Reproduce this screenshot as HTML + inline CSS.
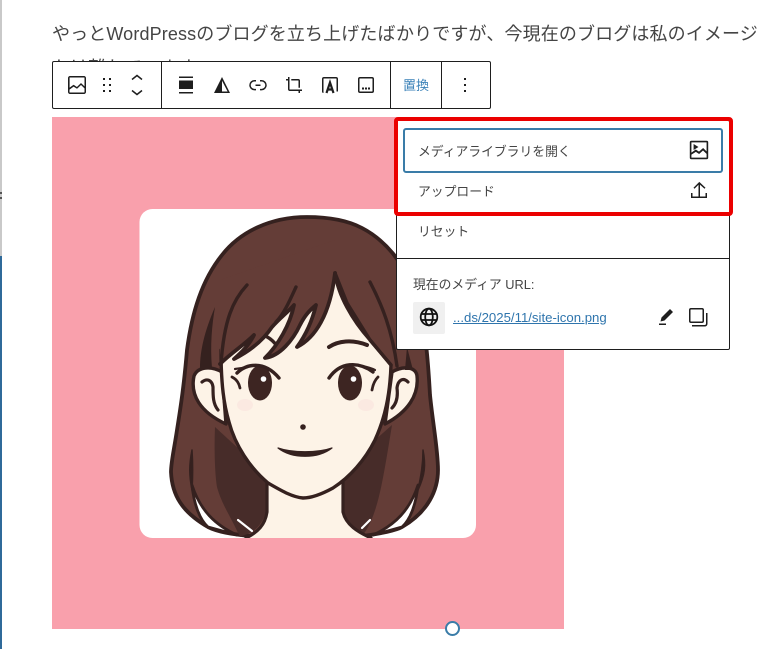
<!DOCTYPE html>
<html lang="ja">
<head>
<meta charset="utf-8">
<title>Image block</title>
<style>
html,body{margin:0;padding:0;background:#fff;}
body{width:759px;height:649px;position:relative;overflow:hidden;font-family:"Liberation Sans","Noto Sans CJK JP",sans-serif;color:#333;}
.abs{position:absolute;}
.line{left:52px;white-space:nowrap;font-size:18px;line-height:26px;color:#444;letter-spacing:.13px;}
.ic{position:absolute;width:24px;height:24px;fill:#1e1e1e;}
.t{position:absolute;white-space:nowrap;font-size:12.8px;line-height:18px;color:#444;}
</style>
</head>
<body>
<div class="abs" style="left:0;top:0;width:2px;height:256px;background:#c9c9c9"></div>
<div class="abs" style="left:0;top:256px;width:2px;height:393px;background:#2f6a9a"></div>
<div class="abs" style="left:0;top:192px;width:2px;height:2px;background:#555"></div>
<div class="abs" style="left:0;top:197px;width:2px;height:2px;background:#555"></div>

<div class="abs line" style="top:21px">やっとWordPressのブログを立ち上げたばかりですが、今現在のブログは私のイメージ</div>
<div class="abs line" style="top:55px;height:6px;overflow:hidden;">かけ離れています</div>

<div class="abs" style="left:52px;top:117px;width:512px;height:512px;background:#f9a0ac"></div>
<svg class="abs" style="left:0;top:0" width="759" height="649" viewBox="0 0 759 649">
  <defs><clipPath id="card"><rect x="139.5" y="209" width="336.5" height="329" rx="13"/></clipPath></defs>
  <rect x="139.5" y="209" width="336.5" height="329" rx="13" fill="#fff"/>
  <g clip-path="url(#card)" stroke-linejoin="round" stroke-linecap="round">
    <!-- hair -->
    <path d="M307 217C270 217 240 232 222 255C202 280 192 312 187 350C184 385 181 405 177 430C174 450 171 462 171 472C172 495 182 512 208 527C220 533 238 535 252 536L362 536C380 534 397 530 402 527C428 512 438 490 438 470C438 450 433 425 430 395C428 360 426 325 414 290C403 262 385 240 362 228C345 219 325 217 307 217Z" fill="#643d37" stroke="#35211f" stroke-width="3.800"/>
    <!-- dark inner hair -->
    <path d="M215 427C214 450 215 475 217 487C222 505 230 515 240 537L252 532C262 525 266 515 267 505L268 480L240 450Z" fill="#472c29"/>
    <path d="M343 483L343 510C346 522 355 530 363 535C378 515 383 480 392 425L375 440Z" fill="#472c29"/>
    <!-- gaps between locks -->
    <path d="M192 485C194 505 200 520 208 527L237 535C215 525 200 510 192 485Z" fill="#fff" stroke="#35211f" stroke-width="2.800"/>
    <path d="M418 485C416 505 410 520 402 527L373 535C395 525 410 510 418 485Z" fill="#fff" stroke="#35211f" stroke-width="2.800"/>
    <path d="M238 520L252 531" stroke="#fff" stroke-width="2.200"/>
    <path d="M370 520L362 528" stroke="#fff" stroke-width="2.200"/>
    <!-- neck -->
    <path d="M267 478L267 512C265 525 258 532 245 538L372 538C358 532 346 525 343 512L343 478Z" fill="#fdf3e7"/>
    <path d="M267 482L267 512C265 525 258 532 246 538" fill="none" stroke="#35211f" stroke-width="3.200"/>
    <path d="M343 482L343 512C346 525 358 532 371 538" fill="none" stroke="#35211f" stroke-width="3.200"/>
    <!-- ears -->
    <path d="M222 372C212 366 198 366 194 376C190 395 200 412 226 424Z" fill="#fdf3e7" stroke="#35211f" stroke-width="3.400"/>
    <path d="M392 372C402 366 416 366 417 376C419 395 408 412 385 424Z" fill="#fdf3e7" stroke="#35211f" stroke-width="3.400"/>
    <path d="M202 382C207 378 212 380 213 387C213 396 213 404 218 410" fill="none" stroke="#35211f" stroke-width="3.200"/>
    <path d="M408 382C403 377 398 380 397 388C398 396 397 403 392 408" fill="none" stroke="#35211f" stroke-width="3.200"/>
    <!-- face -->
    <path d="M221 350C221 385 224 405 229 422C235 445 250 468 268 483C282 491 292 497 303 498C312 498 322 494 333 488C350 477 365 460 375 440C385 418 390 395 391 365L370 340L347 303L335 273L260 300Z" fill="#fdf3e7" stroke="#35211f" stroke-width="3.400"/>
    <ellipse cx="245" cy="405" rx="8" ry="6" fill="#fbe9e1"/>
    <ellipse cx="366" cy="405" rx="8" ry="6" fill="#fbe9e1"/>
    <!-- brows -->
    <path d="M255 335C264 333 272 339 277 346" fill="none" stroke="#35211f" stroke-width="3.400"/>
    <path d="M329 347C338 341 352 339 367 345" fill="none" stroke="#35211f" stroke-width="4"/>
    <!-- bangs -->
    <path d="M220 364C232 352 243 346 254 335C249 345 242 352 234 359C248 352 262 342 272 327C280 318 288 312 294 305C290 325 278 345 265 358C280 356 293 340 300 325C305 315 310 310 316 305C312 322 305 336 297 347C315 338 330 315 335 273L335 240L220 280Z" fill="#643d37"/>
    <path d="M220 364C232 352 243 346 254 335C249 345 242 352 234 359C248 352 262 342 272 327C280 318 288 312 294 305C290 325 278 345 265 358C280 356 293 340 300 325C305 315 310 310 316 305C312 322 305 336 297 347C315 338 330 315 335 273" fill="#35211f" fill-opacity="0" stroke="#35211f" stroke-width="3.800"/>
    <path d="M335 273C338 295 352 320 370 340L391 365" fill="none" stroke="#35211f" stroke-width="3.400"/>
    <!-- hair strands -->
    <g fill="none" stroke="#35211f" stroke-width="3.400">
      <path d="M247 285C233 300 224 320 221 364"/>
      <path d="M370 282C382 305 392 330 397 366"/>
      <path d="M296 287C290 300 284 314 276 322"/>
    </g>
    <path d="M215 307C205 330 200 350 200 368L212 368C210 345 212 325 215 307Z" fill="#35211f"/>
    <path d="M407 347L413 370L405 370Z" fill="#35211f"/>
    <path d="M192 450C189 465 189 475 192 490C193 475 193 465 192 450Z" fill="#35211f" stroke="#35211f" stroke-width="1.500"/>
    <path d="M423 450C426 465 425 475 418 490C421 475 423 465 423 450Z" fill="#35211f" stroke="#35211f" stroke-width="1.500"/>
    <!-- eyes -->
    <ellipse cx="260" cy="383" rx="12" ry="17.500" fill="#3d2522"/>
    <path d="M237 373C246 364 264 360 279 378" fill="none" stroke="#35211f" stroke-width="3.400"/>
    <path d="M232 377C236 379 239 383 240 388" fill="none" stroke="#35211f" stroke-width="2.800"/>
    <path d="M235 369C240 368 244 368 248 367" fill="none" stroke="#35211f" stroke-width="2.200"/>
    <circle cx="263.500" cy="379" r="2.800" fill="#fff"/>
    <ellipse cx="350" cy="383" rx="12" ry="17.500" fill="#3d2522"/>
    <path d="M329 378C340 362 358 361 373 372" fill="none" stroke="#35211f" stroke-width="3.400"/>
    <path d="M378 377C375 380 373 384 372 390" fill="none" stroke="#35211f" stroke-width="2.800"/>
    <path d="M362 366C367 367 371 368 375 370" fill="none" stroke="#35211f" stroke-width="2.200"/>
    <circle cx="353.500" cy="379" r="2.800" fill="#fff"/>
    <circle cx="303" cy="427" r="2.800" fill="#35211f"/>
    <path d="M278 448C292 453 318 453 332 448C318 459 292 459 278 448Z" fill="#35211f" stroke="#35211f" stroke-width="1.200"/>
  </g>
</svg>

<!-- toolbar -->
<div class="abs" style="left:52px;top:61px;width:437px;height:46px;background:#fff;border:1px solid #1e1e1e;border-radius:2px"></div>
<div class="abs" style="left:161px;top:62px;width:1px;height:46px;background:#1e1e1e"></div>
<div class="abs" style="left:390px;top:62px;width:1px;height:46px;background:#1e1e1e"></div>
<div class="abs" style="left:441px;top:62px;width:1px;height:46px;background:#1e1e1e"></div>

<svg class="ic" style="left:65px;top:73px" viewBox="0 0 24 24"><path d="M19 3H5c-1.100 0-2 .9-2 2v14c0 1.100.9 2 2 2h14c1.100 0 2-.9 2-2V5c0-1.100-.9-2-2-2zM5 4.500h14c.3 0 .5.2.5.5v8.400l-3-2.900c-.3-.3-.8-.3-1 0L11.900 14 9 12c-.3-.2-.6-.2-.8 0l-3.600 2.600V5c-.1-.3.1-.5.4-.5zm14 15H5c-.3 0-.5-.2-.5-.5v-2.400l4.100-3 3 1.900c.3.2.7.2.9-.1L16 12l3.500 3.400V19c0 .3-.2.500-.5.500z"/></svg>
<svg class="ic" style="left:95px;top:73px" viewBox="0 0 24 24"><path d="M8 7h2V5H8v2zm0 6h2v-2H8v2zm0 6h2v-2H8v2zm6-14v2h2V5h-2zm0 8h2v-2h-2v2zm0 6h2v-2h-2v2z"/></svg>
<svg class="ic" style="left:125px;top:73px" viewBox="0 0 24 24" fill="none"><path d="M7 6.500L12 2.500L17 6.500M7 17.500L12 21.500L17 17.500" fill="none" stroke="#1e1e1e" stroke-width="1.500"/></svg>

<svg class="ic" style="left:174px;top:73px" viewBox="0 0 24 24"><path d="M5 3.500h14V5H5zM5 7.500h14v8.500H5zM5 19h14v1.500H5z"/></svg>
<svg class="ic" style="left:210px;top:73px" viewBox="0 0 24 24"><path d="M12 4L4 20h16L12 4zm0 3.800L17.600 18.500H12z" fill-rule="evenodd"/></svg>
<svg class="ic" style="left:246px;top:73px" viewBox="0 0 24 24"><path d="M10 17.389H8.444A5.194 5.194 0 1 1 8.444 7H10v1.500H8.444a3.694 3.694 0 0 0 0 7.389H10v1.500ZM14 7h1.556a5.194 5.194 0 0 1 0 10.390H14v-1.500h1.556a3.694 3.694 0 0 0 0-7.390H14V7Zm-4.500 6h5v-1.500h-5V13Z"/></svg>
<svg class="ic" style="left:282px;top:73px" viewBox="0 0 24 24"><path d="M18 20v-2h2v-1.500H7.750a.25.25 0 0 1-.25-.25V4H6v2H4v1.500h2v8.750c0 .966.784 1.750 1.750 1.750h8.750v2H18zM9.273 7.500h6.977a.25.25 0 0 1 .25.25v6.977H18V7.750A1.750 1.750 0 0 0 16.250 6H9.273v1.500z"/></svg>
<svg class="ic" style="left:318px;top:73px" viewBox="0 0 24 24"><path d="M5.500 20V6c0-.3.2-.5.5-.5h12c.3 0 .5.2.5.5v12.500H20V6a2 2 0 0 0-2-2H6a2 2 0 0 0-2 2v12.500A1.500 1.500 0 0 0 5.500 20z"/><path d="M8.500 20L12 9.500L15.500 20M9.800 16.500h4.400" fill="none" stroke="#1e1e1e" stroke-width="2.200"/></svg>
<svg class="ic" style="left:354px;top:73px" viewBox="0 0 24 24"><path d="M6 4h12a2 2 0 0 1 2 2v12a2 2 0 0 1-2 2H6a2 2 0 0 1-2-2V6a2 2 0 0 1 2-2zm0 1.500a.5.5 0 0 0-.5.500v12c0 .3.2.5.5.5h12a.5.5 0 0 0 .5-.5V6a.5.5 0 0 0-.5-.5z" fill-rule="evenodd"/><path d="M8 14.500h2v2H8zM11 14.500h2v2h-2zM14 14.500h2v2h-2z"/></svg>

<div class="abs" style="left:403px;top:77px;font-size:13px;line-height:18px;color:#3b82b8;white-space:nowrap">置換</div>
<svg class="ic" style="left:453px;top:73px" viewBox="0 0 24 24"><path d="M13 19h-2v-2h2v2zm0-6h-2v-2h2v2zm0-6h-2V5h2v2z"/></svg>

<!-- popover -->
<div class="abs" style="left:396px;top:120px;width:332px;height:228px;background:#fff;border:1px solid #1e1e1e;border-radius:2px"></div>
<div class="abs" style="left:397px;top:258px;width:332px;height:1px;background:#1e1e1e"></div>
<div class="abs" style="left:394px;top:117px;width:331px;height:91px;border:4px solid #eb0000;border-radius:4px"></div>
<div class="abs" style="left:403px;top:128px;width:316px;height:41px;border:2px solid #3a7ca8;border-radius:3px"></div>

<div class="t" style="left:418px;top:143px">メディアライブラリを開く</div>
<div class="t" style="left:418px;top:183px">アップロード</div>
<div class="t" style="left:418px;top:223px">リセット</div>
<div class="t" style="left:413px;top:276px">現在のメディア URL:</div>

<svg class="ic" style="left:686px;top:137px;width:26px;height:26px" viewBox="0 0 24 24"><path d="M5 3.500h14A1.500 1.500 0 0 1 20.500 5v14a1.500 1.500 0 0 1-1.500 1.500H5A1.500 1.500 0 0 1 3.500 19V5A1.500 1.500 0 0 1 5 3.500zM5 5v9.400l4-2.900 3 2 3.800-3.300L19 13.300V5zm0 11.300V19h14v-3.400l-3.300-3.100-3.600 3.200-3-2z" fill-rule="evenodd"/><path d="M7 6.500L11.500 9.200L7 12z"/></svg>
<svg class="ic" style="left:687px;top:178px" viewBox="0 0 24 24"><path d="M18.500 15v3.500H13V6.700l4.500 4.100 1-1.100-6.200-5.800-5.800 5.800 1 1.100 4-4v11.700h-6V15H4v5h16v-5z"/></svg>

<div class="abs" style="left:413px;top:302px;width:32px;height:32px;background:#f0f0f0;border-radius:2px"></div>
<svg class="ic" style="left:417px;top:305px" viewBox="0 0 24 24" fill="none"><g fill="none" stroke="#111" stroke-width="1.800"><circle cx="12" cy="12" r="8.300"/><ellipse cx="12" cy="12" rx="3.800" ry="8.300"/><path d="M4.300 9h15.400M4.300 15h15.400"/></g></svg>

<div class="abs" style="left:453px;top:309px;font-size:13.2px;line-height:18px;color:#2f75ad;text-decoration:underline;white-space:nowrap">...ds/2025/11/site-icon.png</div>

<svg class="ic" style="left:654px;top:305px" viewBox="0 0 24 24"><path d="m19 7-3-3-8.500 8.500-1 4 4-1L19 7Zm-7 11.500H5V20h7v-1.500Z"/></svg>
<svg class="ic" style="left:686px;top:305px" viewBox="0 0 24 24"><path fill-rule="evenodd" d="M5 4.500h11a.5.5 0 0 1 .5.5v11a.5.5 0 0 1-.5.5H5a.5.5 0 0 1-.5-.5V5a.5.5 0 0 1 .5-.5ZM3 5a2 2 0 0 1 2-2h11a2 2 0 0 1 2 2v11a2 2 0 0 1-2 2H5a2 2 0 0 1-2-2V5Z"/><path d="M20 8v10.750c0 .69-.56 1.250-1.250 1.250H6v1.500h12.750a2.750 2.750 0 0 0 2.750-2.750V8H20Z"/></svg>

<!-- resize handle -->
<div class="abs" style="left:445px;top:621px;width:11px;height:11px;background:#fff;border:2px solid #3a7ca8;border-radius:50%"></div>
</body>
</html>
